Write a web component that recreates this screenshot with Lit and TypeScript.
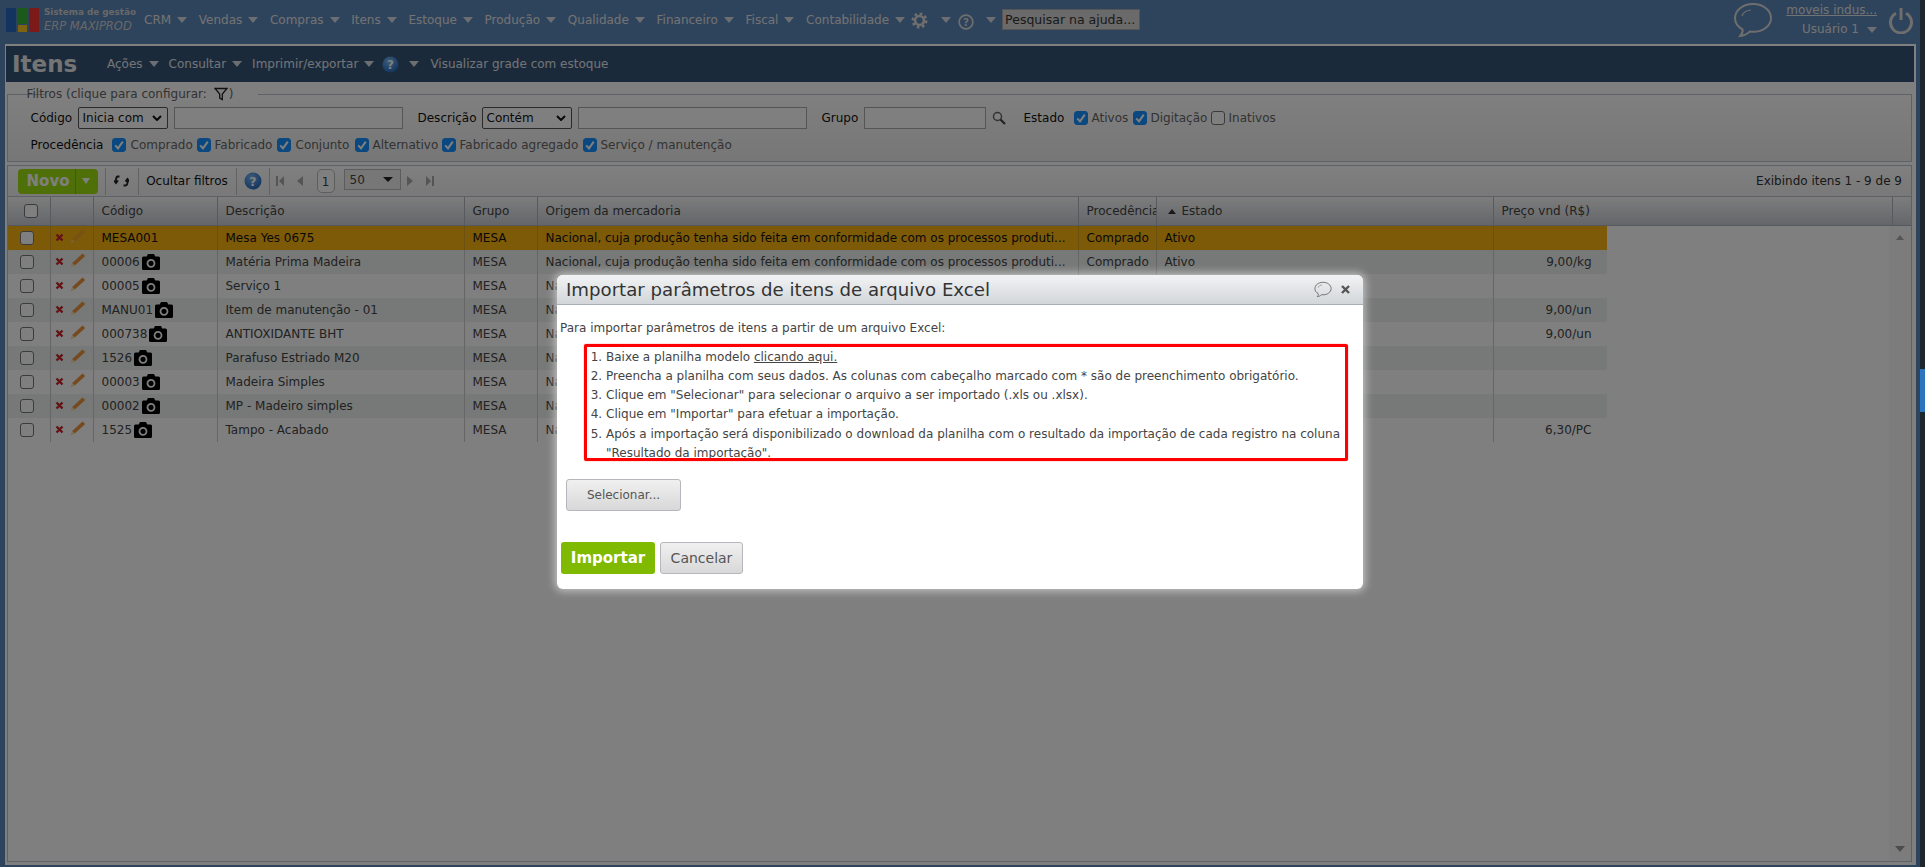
import { LitElement, html, css } from "lit";
import { customElement } from "lit/decorators.js";

const ORIGEM = "Nacional, cuja produção tenha sido feita em conformidade com os processos produti...";
const ROWS = [
  ["MESA001", "Mesa Yes 0675", "", false],
  ["00006", "Matéria Prima Madeira", "9,00/kg", true],
  ["00005", "Serviço 1", "", true],
  ["MANU01", "Item de manutenção - 01", "9,00/un", true],
  ["000738", "ANTIOXIDANTE BHT", "9,00/un", true],
  ["1526", "Parafuso Estriado M20", "", true],
  ["00003", "Madeira Simples", "", true],
  ["00002", "MP - Madeiro simples", "", true],
  ["1525", "Tampo - Acabado", "6,30/PC", true],
] as [string, string, string, boolean][];

const MENUS = ["CRM", "Vendas", "Compras", "Itens", "Estoque", "Produção", "Qualidade", "Financeiro", "Fiscal", "Contabilidade"];

const caret = html`<span class="caret"></span>`;
const check = html`<span class="cb on"><svg viewBox="0 0 14 14" width="14" height="14"><path d="M3.2 7.4 6 10.4 10.8 3.6" fill="none" stroke="#fff" stroke-width="2"/></svg></span>`;
const uncheck = html`<span class="cb"></span>`;
const helpBlue = (s: number) => html`<svg width=${s} height=${s} viewBox="0 0 18 18" class="help"><defs><radialGradient id="hb" cx=".4" cy=".3" r=".8"><stop offset="0" stop-color="#7ab8f5"/><stop offset="1" stop-color="#1d62b8"/></radialGradient></defs><circle cx="9" cy="9" r="8.5" fill="url(#hb)"/><text x="9" y="13.5" text-anchor="middle" font-size="12.5" font-weight="700" font-family="DejaVu Sans" fill="#fff">?</text></svg>`;
const bubble = (w: number, h: number, c: string, sw: number) => html`<svg width=${w} height=${h} viewBox="0 0 40 36"><path d="M20 2C9.5 2 2 8.5 2 16c0 4.8 2.8 8.8 7.5 11.3.6 2.6-.5 4.8-2.2 6.7 3.8-.3 7.2-2.2 9.6-4.4 1 .1 2 .2 3.1.2 10.5 0 18-6.3 18-13.8S30.500 2 20 2Z" fill="none" stroke=${c} stroke-width=${sw}/><path d="M9 14c1-3.500 4-5.500 9-6" fill="none" stroke=${c} stroke-width=${sw * 0.6}/></svg>`;
const camera = html`<svg class="cam" width="18" height="16" viewBox="0 0 18 16"><path d="M6 0h6l1.300 2.500H16.500A1.500 1.500 0 0 1 18 4v10.500a1.500 1.500 0 0 1-1.500 1.500h-15A1.500 1.500 0 0 1 0 14.500V4a1.500 1.500 0 0 1 1.500-1.500h3.200Z" fill="#000"/><circle cx="9" cy="9.300" r="3.500" fill="none" stroke="#fff" stroke-width="1.800"/></svg>`;
const del = html`<svg width="9" height="9" viewBox="0 0 9 9"><path d="M1.500 1.500 7.500 7.500M7.500 1.500 1.500 7.500" stroke="#c82428" stroke-width="2.400"/></svg>`;
const pencil = html`<svg width="16" height="15" viewBox="0 0 16 15"><path d="M12.500.6 15.200 3 4.800 12.600 2 10.200Z" fill="#e8943c"/><path d="M2 10.200 4.800 12.600.6 14.600Z" fill="#f2d9b0"/></svg>`;

@customElement("app-root")
export class AppRoot extends LitElement {
  static styles = css`
    :host { display: block; width: 1925px; height: 867px; position: relative; overflow: hidden; font: 12px/14px "DejaVu Sans", sans-serif; color: #222; }
    .page { display: flex; width: 1925px; height: 867px; background: #5c86b8; }
    .main { width: 1920px; display: flex; flex-direction: column; }
    .sb { width: 5px; background: #3a5060; }

    .top { height: 44px; display: flex; align-items: center; color: #e6e6e6; flex: none; }
    .logo { display: flex; gap: 2px; margin-left: 6px; width: 33px; height: 24px; margin-top: -5px; }
    .logo i { display: block; width: 10px; height: 24px; }
    .lb { background: #2468bc; }
    .lm { display: flex; flex-direction: column; gap: 1px; width: 9px; }
    .lm i { width: 9px; }
    .lg { height: 16px !important; background: #38b438; }
    .la { height: 7px !important; background: #fcc820; }
    .lr { background: #f83434; }
    .brand { margin: -5px 0 0 5px; width: 100px; display: flex; flex-direction: column; color: #d0d0d0; }
    .brand b { font-size: 8.800px; line-height: 13px; font-weight: 700; white-space: nowrap; }
    .brand em { font-size: 11.500px; line-height: 15px; font-weight: 400; white-space: nowrap; }
    .nav { display: flex; align-items: center; margin-top: -5px; font-size: 12px; }
    .nav span.m { display: flex; align-items: center; margin-right: 11.700px; white-space: nowrap; }
    .nav span.m:last-child { margin-right: 6px; }
    .caret { display: inline-block; width: 0; height: 0; border: 5px solid transparent; border-top: 6px solid #d8dde4; border-bottom: 0; margin-left: 6px; }
    .tools { display: flex; align-items: center; }
    .tools .caret { margin: -5px 0 0 0; }
    .gear { margin: -4px 13px 0 0; }
    .qm { margin: 0 12px 0 7px; }
    .search { margin: -5px 0 0 6px; width: 138px; height: 21px; box-sizing: border-box; background: #d4d4d4; border: 1px solid #aaa; padding: 2px; color: #333; font-size: 12.500px; line-height: 16px; white-space: nowrap; overflow: hidden; }
    .spacer { flex: 1; }
    .user { display: flex; align-items: center; margin-top: -4px; }
    .who { margin-left: 11px; width: 93px; display: flex; flex-direction: column; align-items: flex-end; gap: 4px; }
    .who u { font-size: 12px; line-height: 15px; white-space: nowrap; }
    .who div { display: flex; align-items: center; line-height: 15px; white-space: nowrap; }
    .who .caret { margin-left: 8px; }
    .pw { margin: 0 7px 0 12px; }

    .frame { flex: 1; background: #fff; margin: 0 4px 2px 5px; padding: 2px 2px 3px 1px; display: flex; flex-direction: column; min-height: 0; }
    .title { height: 36px; background: #345476; color: #e4e8ee; display: flex; align-items: center; flex: none; }
    .title h1 { margin: 0 0 0 6px; font: 700 23px/30px "DejaVu Sans", sans-serif; color: #e8e8e8; width: 95px; flex: none; }
    .title span.t { display: flex; align-items: center; white-space: nowrap; }
    .title .t1 { margin-right: 10px; }
    .title .help { margin: 0 10px 0 8px; }
    .title .c2 { margin: 0 11px 0 0; }

    fieldset { margin: 3px 2px 0 0.500px; padding: 0 0 0 23px; border: 1px solid #bcc2ca; height: 77px; box-sizing: border-box; min-width: 0; background: linear-gradient(#fff, #eee); flex: none; }
    legend { margin-left: 14px; padding: 0 1px 0 5px; color: #666; display: flex; align-items: center; line-height: 18px; position: relative; left: -23px; }
    legend svg { margin: 0 1px 0 7px; }
    .f1 { display: flex; align-items: center; height: 24px; margin-top: 3px; }
    .f2 { display: flex; align-items: center; height: 16px; margin-top: 7px; }
    .lab { white-space: nowrap; color: #111; }
    .opt { color: #666; white-space: nowrap; }
    .sel { box-sizing: border-box; height: 22px; border: 1px solid #555; border-radius: 2px; background: #fff; color: #111; display: flex; align-items: center; justify-content: space-between; padding: 0 5px 0 4px; }
    .sel svg { flex: none; }
    .inp { box-sizing: border-box; height: 22px; border: 1px solid #aaa; background: #fff; }
    .cb { box-sizing: border-box; width: 14px; height: 14px; display: block; flex: none; border: 1px solid #777; border-radius: 3px; background: #fff; }
    .cb.on { background: #1490ff; border-color: #1490ff; }
    .cb.on svg { display: block; margin: -1px; }

    .bar { height: 31px; margin: 3px 2px 0 .500px; border: 1px solid #bcc2ca; border-bottom: 0; background: linear-gradient(#fff,#f2f2f2); display: flex; align-items: center; flex: none; box-sizing: border-box; }
    .novo { margin-left: 10px; width: 80px; height: 25px; box-sizing: border-box; background: #9ee010; border-radius: 4px; display: flex; align-items: center; color: #fff; font-weight: 700; font-size: 15px; margin-right: 7px; }
    .novo b { width: 58px; text-align: right; padding-right: 5px; box-sizing: border-box; border-right: 1px solid #80b410; line-height: 25px; flex: none; }
    .novo .caret { margin-left: 6px; border-width: 4px; border-top-width: 6px; border-top-color: #fff; }
    .bsep { width: 1px; height: 27px; background: #c4c4c4; flex: none; }
    .bi { display: flex; align-items: center; justify-content: center; flex: none; }
    .refresh { width: 32px; }
    .hide { width: 97px; color: #111; }
    .hlp { width: 32px; }
    .pg { gap: 13px; margin-left: 6px; }
    .pgn { box-sizing: border-box; width: 18px; height: 24px; border: 1px solid #bbb; border-radius: 5px; background: #fff; text-align: center; line-height: 24px; color: #444; margin-left: 14px; }
    .pgs { box-sizing: border-box; width: 57px; height: 21px; margin: -3px 0 0 9px; border: 1px solid #bbb; background: #eee; color: #444; display: flex; align-items: center; justify-content: space-between; padding: 0 7px 0 5px; }
    .pgs .caret { margin: 0; border-top-color: #222; border-width: 5px; border-top-width: 5px; border-bottom: 0; }
    .count { margin-left: auto; margin-right: 9px; color: #333; }

    .grid { flex: 1; margin: 0 2px 0 .500px; border: 1px solid #bcc2ca; display: flex; flex-direction: column; min-height: 0; }
    .cols { display: grid; grid-template-columns: 43px 43px 124px 247px 73px 541px 78px 337px 113px; width: 1599px; }
    .ghead { display: grid; grid-template-columns: 43px 43px 124px 247px 73px 541px 78px 337px 399px 1fr; height: 29px; background: linear-gradient(#fafafa, #c8ccd2); border-bottom: 1px solid #aab0b8; box-sizing: border-box; flex: none; color: #444; }
    .ghead > div { border-right: 1px solid #b0b4bc; display: flex; align-items: center; padding-left: 8px; white-space: nowrap; overflow: hidden; box-sizing: border-box; }
    .ghead > div:last-child { border-right: 0; }
    .ghead .c { padding-left: 4px; justify-content: center; }
    .ghead .est { padding-left: 9px; }
    .up { display: inline-block; width: 0; height: 0; border: 4px solid transparent; border-bottom: 5px solid #333; border-top: 0; margin: 0 6px 0 2px; }
    .gbody { flex: 1; display: flex; min-height: 0; }
    .rows { flex: 1; }
    .row { height: 24px; color: #444; }
    .row > div { border-right: 1px solid #ccc; display: flex; align-items: center; padding-left: 8px; white-space: nowrap; overflow: hidden; box-sizing: border-box; }
    .row > div:last-child { border-right: 0; justify-content: flex-end; padding: 0 15px 0 0; }
    .row > div.c { padding: 0 4px 0 0; justify-content: center; }
    .row > div.acts { padding-left: 4px; gap: 6px; }
    .row > div.cod { gap: 2px; }
    .odd { background: #eef2f0; }
    .sel-row { background: #fbb410; color: #111; }
    .sel-row > div { border-right-color: #d8a020; }
    .sel-row .pen { opacity: .5; }
    .scroll { width: 22px; background: #f8f8f8; display: flex; flex-direction: column; justify-content: space-between; align-items: center; padding: 9px 0; box-sizing: border-box; flex: none; }
    .sa { width: 0; height: 0; border: 4px solid transparent; border-bottom: 5px solid #aaa; border-top: 0; }
    .sd { width: 0; height: 0; border: 5px solid transparent; border-top: 6px solid #999; border-bottom: 0; }

    .overlay { position: absolute; inset: 0 5px 0 0; background: rgba(0,0,0,.5); }
    .sbar { position: absolute; right: 0; top: 0; width: 5px; height: 867px; background: #1c272e; }
    .thumb { position: absolute; right: 0; top: 369px; width: 5px; height: 43px; background: #2a74c0; }

    .dlg { position: absolute; left: 557px; top: 275px; width: 806px; height: 314px; background: #fff; border-radius: 6px; box-shadow: 0 0 8px 2px rgba(255,255,255,.55); color: #444; }
    .dh { height: 29px; border-bottom: 1px solid #a8aeb6; border-radius: 6px 6px 0 0; background: linear-gradient(#f2f3f4, #d2d6da); display: flex; align-items: center; padding: 0 13px 0 9px; font-size: 18.150px; color: #333; white-space: nowrap; }
    .dh .sp { flex: 1; }
    .dh svg { display: block; }
    .dh .x { margin-left: 9px; }
    .db { padding: 15px 0 0 3px; }
    .db p { margin: 0; line-height: 17px; }
    ol { margin: 11px 16px 0 0; padding: 0 0 0 46px; line-height: 19px; }
    ol li:nth-child(5) { margin-top: 1px; }
    ol a { color: #444; text-decoration: underline; }
    .btn { box-sizing: border-box; border: 1px solid #b4b8bc; border-radius: 3px; background: linear-gradient(#f0f0f0, #d8d8d8); color: #555; display: flex; align-items: center; justify-content: center; }
    .btn.s { width: 115px; height: 32px; margin: 16px 0 0 6px; }
    .acts2 { display: flex; gap: 5px; margin: 31px 0 0 1px; }
    .btn.i { width: 94px; height: 32px; background: #7fba00; border: 0; color: #fff; font: 700 15px "DejaVu Sans", sans-serif; }
    .btn.c { width: 83px; height: 32px; font-size: 14px; }
    .red { position: absolute; left: 27px; top: 69px; width: 764px; height: 117px; box-sizing: border-box; border: 3px solid #f00; border-radius: 2px; box-shadow: 0 0 1px #f00; }
    .w47 { width: 47px; } .w64 { width: 64px; } .w42 { width: 42px; } .w50 { width: 50px; } .w81 { width: 81px; }
    .s90 { width: 90px; }
    .i229 { width: 229px; margin: 0 15px 0 6px; }
    .i122 { width: 122px; }
    .mag { margin: 0 18px 0 6px; }
    .o4 { margin-left: 4px; }
    .o5 { margin: 0 5px; }
    .o45 { margin: 0 5px 0 4px; }
    .o44 { margin: 0 4px; }
    .o36 { width: 36px; } .o54 { width: 54px; } .o56 { width: 56px; } .o57 { width: 57px; } .o61 { width: 61px; } .o64 { width: 64px; } .o118 { width: 118px; }
  `;

  private row(r: [string, string, string, boolean], i: number) {
    const cls = i === 0 ? "row cols sel-row" : i % 2 === 1 ? "row cols odd" : "row cols";
    return html`<div class=${cls}>
      <div class="c">${uncheck}</div>
      <div class="acts"><span>${del}</span><span class="pen">${pencil}</span></div>
      <div class="cod">${r[0]}${r[3] ? camera : ""}</div>
      <div>${r[1]}</div>
      <div>MESA</div>
      <div>${ORIGEM}</div>
      <div>${i < 2 ? "Comprado" : ""}</div>
      <div>${i < 2 ? "Ativo" : ""}</div>
      <div>${r[2]}</div>
    </div>`;
  }

  render() {
    const gear = html`<svg class="gear" width="17" height="17" viewBox="0 0 19 19"><circle cx="9.500" cy="9.500" r="5" fill="none" stroke="#ddd" stroke-width="3"/><circle cx="9.500" cy="9.500" r="7.500" fill="none" stroke="#ddd" stroke-width="3" stroke-dasharray="3 2.890"/></svg>`;
    const q = html`<svg class="qm" width="16" height="16" viewBox="0 0 17 17"><circle cx="8.500" cy="8.500" r="7.300" fill="none" stroke="#ddd" stroke-width="1.800"/><text x="8.500" y="12.500" text-anchor="middle" font-size="11" font-weight="700" font-family="DejaVu Sans" fill="#ddd">?</text></svg>`;
    const arrowSel = html`<svg width="10" height="6" viewBox="0 0 10 6"><path d="M1 1 5 5 9 1" fill="none" stroke="#111" stroke-width="2"/></svg>`;
    const opt = (cls: string, t: string) => html`<span class="opt ${cls}">${t}</span>`;
    return html`<div class="page">
      <div class="main">
        <div class="top">
          <div class="logo"><i class="lb"></i><div class="lm"><i class="lg"></i><i class="la"></i></div><i class="lr"></i></div>
          <div class="brand"><b>Sistema de gestão</b><em>ERP MAXIPROD</em></div>
          <div class="nav">${MENUS.map((m) => html`<span class="m">${m}${caret}</span>`)}</div>
          <div class="tools">
            ${gear}${caret}${q}${caret}
            <div class="search">Pesquisar na ajuda...</div>
          </div>
          <div class="spacer"></div>
          <div class="user">
            ${bubble(40, 36, "#ddd", 2)}
            <div class="who"><u>moveis indus...</u><div>Usuário 1${caret}</div></div>
            <svg class="pw" width="24" height="27" viewBox="0 0 24 27"><path d="M7 6.200A10.500 10.500 0 1 0 17 6.200" fill="none" stroke="#ddd" stroke-width="3"/><path d="M12 1v12" stroke="#ddd" stroke-width="3"/></svg>
          </div>
        </div>
        <div class="frame">
          <div class="title">
            <h1>Itens</h1>
            <span class="t t1">Ações${caret}</span>
            <span class="t t1">Consultar${caret}</span>
            <span class="t">Imprimir/exportar${caret}</span>
            ${helpBlue(17)}
            <span class="caret c2"></span>
            <span class="t">Visualizar grade com estoque</span>
          </div>
          <fieldset>
            <legend>Filtros (clique para configurar: <svg width="14" height="14" viewBox="0 0 14 14"><path d="M1 1.500h12L8.300 7v5.500L5.700 11V7Z" fill="none" stroke="#222" stroke-width="1.300"/></svg>)</legend>
            <div class="f1">
              <span class="lab w47">Código</span>
              <div class="sel s90">Inicia com ${arrowSel}</div>
              <div class="inp i229"></div>
              <span class="lab w64">Descrição</span>
              <div class="sel s90">Contém ${arrowSel}</div>
              <div class="inp i229"></div>
              <span class="lab w42">Grupo</span>
              <div class="inp i122"></div>
              <svg class="mag" width="14" height="14" viewBox="0 0 14 14"><circle cx="5.500" cy="5.500" r="4" fill="#fff" stroke="#666" stroke-width="1.500"/><path d="M8.500 8.500 13 13" stroke="#444" stroke-width="2.200"/></svg>
              <span class="lab w50">Estado</span>
              ${check}${opt("o45 o36", "Ativos")}
              ${check}${opt("o44 o56", "Digitação")}
              ${uncheck}${opt("o4", "Inativos")}
            </div>
            <div class="f2">
              <span class="lab w81">Procedência</span>
              ${check}${opt("o5 o61", "Comprado")}
              ${check}${opt("o45 o57", "Fabricado")}
              ${check}${opt("o5 o54", "Conjunto")}
              ${check}${opt("o45 o64", "Alternativo")}
              ${check}${opt("o45 o118", "Fabricado agregado")}
              ${check}${opt("o4", "Serviço / manutenção")}
            </div>
          </fieldset>
          <div class="bar">
            <div class="novo"><b>Novo</b><span class="caret"></span></div>
            <div class="bsep"></div>
            <div class="bi refresh"><svg width="15" height="12" viewBox="0 0 15 12"><path d="M5 1.500H3.500C2 1.500 1.500 3 1.500 5v1.500M-.5 5.500 1.500 8 3.500 5.500M9 10.500h2c1.500 0 2-1.500 2-3.500V5.500M11 6.500 13 4 15 6.500" fill="none" stroke="#222" stroke-width="1.800" transform="translate(.5 0)"/></svg></div>
            <div class="bsep"></div>
            <div class="bi hide">Ocultar filtros</div>
            <div class="bsep"></div>
            <div class="bi hlp">${helpBlue(18)}</div>
            <div class="bsep"></div>
            <div class="bi pg"><svg width="8" height="10" viewBox="0 0 8 10"><path d="M0 0h2v10H0ZM8 0v10L3 5Z" fill="#aaa"/></svg><svg width="6" height="10" viewBox="0 0 6 10"><path d="M6 0v10L0 5Z" fill="#aaa"/></svg></div>
            <div class="pgn">1</div>
            <div class="pgs">50<span class="caret"></span></div>
            <div class="bi pg"><svg width="6" height="10" viewBox="0 0 6 10"><path d="M0 0v10L6 5Z" fill="#aaa"/></svg><svg width="8" height="10" viewBox="0 0 8 10"><path d="M0 0v10L5 5ZM6 0h2v10H6Z" fill="#aaa"/></svg></div>
            <div class="count">Exibindo itens 1 - 9 de 9</div>
          </div>
          <div class="grid">
            <div class="ghead">
              <div class="c">${uncheck}</div><div></div>
              <div>Código</div><div>Descrição</div><div>Grupo</div><div>Origem da mercadoria</div><div>Procedência</div>
              <div class="est"><span class="up"></span>Estado</div><div>Preço vnd (R$)</div><div></div>
            </div>
            <div class="gbody">
              <div class="rows">${ROWS.map((r, i) => this.row(r, i))}</div>
              <div class="scroll"><span class="sa"></span><span class="sd"></span></div>
            </div>
          </div>
        </div>
      </div>
      <div class="sb"></div>
    </div>
    <div class="overlay"></div>
    <div class="sbar"></div>
    <div class="thumb"></div>
    <div class="dlg">
      <div class="dh">Importar parâmetros de itens de arquivo Excel<span class="sp"></span>${bubble(18, 17, "#666", 2)}<svg class="x" width="9" height="9" viewBox="0 0 9 9"><path d="M1 1 8 8M8 1 1 8" stroke="#555" stroke-width="2.400"/></svg></div>
      <div class="db">
        <p>Para importar parâmetros de itens a partir de um arquivo Excel:</p>
        <ol>
          <li>Baixe a planilha modelo <a>clicando aqui.</a></li>
          <li>Preencha a planilha com seus dados. As colunas com cabeçalho marcado com * são de preenchimento obrigatório.</li>
          <li>Clique em "Selecionar" para selecionar o arquivo a ser importado (.xls ou .xlsx).</li>
          <li>Clique em "Importar" para efetuar a importação.</li>
          <li>Após a importação será disponibilizado o download da planilha com o resultado da importação de cada registro na coluna "Resultado da importação".</li>
        </ol>
        <div class="btn s">Selecionar...</div>
        <div class="acts2"><div class="btn i">Importar</div><div class="btn c">Cancelar</div></div>
      </div>
      <div class="red"></div>
    </div>`;
  }
}
